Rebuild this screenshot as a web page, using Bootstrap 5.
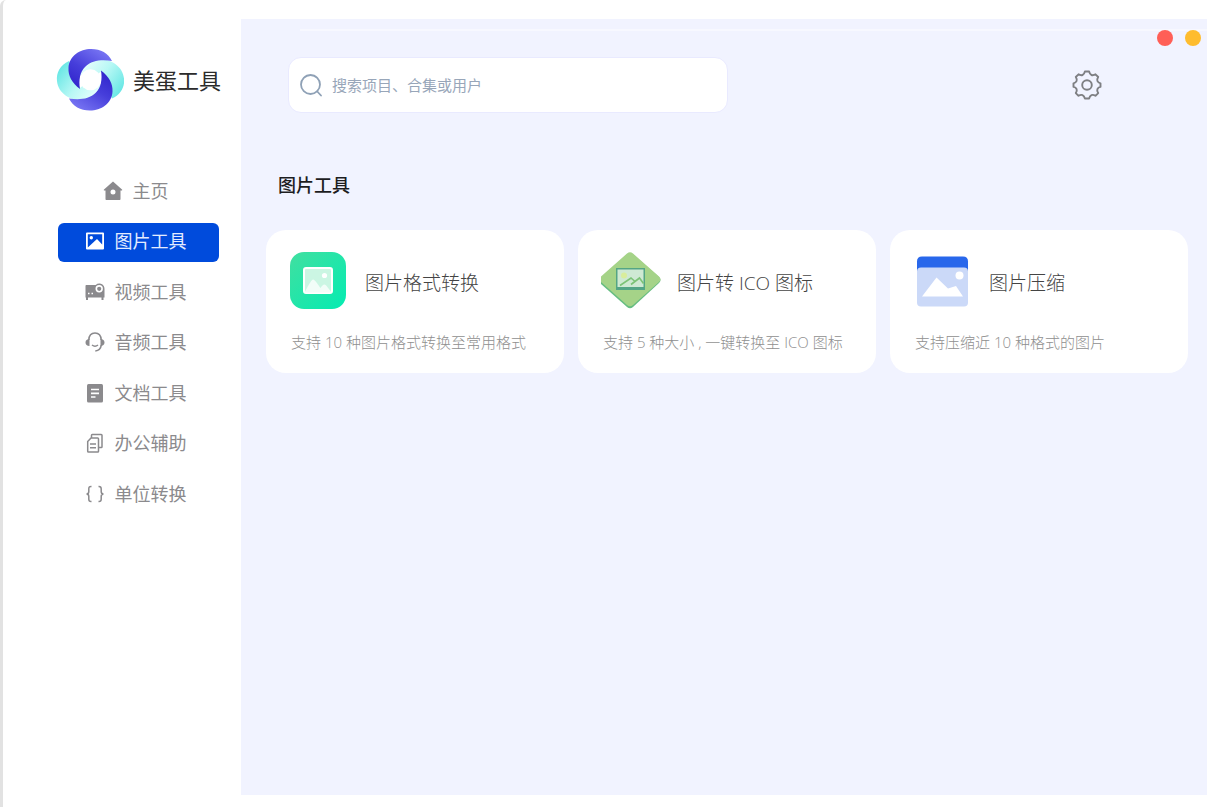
<!DOCTYPE html>
<html lang="zh-CN">
<head>
<meta charset="utf-8">
<meta name="viewport" content="width=device-width, initial-scale=1">
<title>美蛋工具</title>
<link rel="stylesheet" href="https://cdn.jsdelivr.net/npm/bootstrap@5.3.0/dist/css/bootstrap.min.css">
<style>
  body { font-family: "Open Sans", "Noto Sans CJK SC", sans-serif; background: #fff; }
  .app { min-height: 100vh; border-left: 3px solid #e2e2e2; border-top-left-radius: 6px; }
  .side { width: 238px; padding: 48px 22px 24px 52px; }
  .brand { gap: 9px; font-size: 22px; line-height: 32px; color: #2b2b2b; white-space: nowrap; margin-left: 1px; }
  .menu { height: 342px; margin: 60px 0 0 3px; }
  .menu .nav-link { height: 39px; gap: 10px; padding: 0 6px 2px 0; border-radius: 6px; font-size: 18px; line-height: 26px; color: #8b8a8d; }
  .menu .nav-link.active { background: #004bdc; color: #e3ebff; }
  .work { background: #f1f3ff; margin: 19px 0 12px; padding: 10px 19px 24px 25px; min-width: 0; }
  .topline { height: 2px; background: #f7f8ff; margin: 0 -19px 0 34px; }
  .topbar { padding: 26px 86px 0 22px; }
  .dots { top: 30px; right: 6px; gap: 12px; }
  .dots button { width: 16px; height: 16px; border: 0; padding: 0; border-radius: 50%; }
  .dot-close { background: #ff5f57; }
  .dot-min { background: #febc2e; }
  .search { flex: 0 1 440px; height: 56px; background: #fff; border: 1px solid #e9eaff; border-radius: 13px; padding: 0 11px; gap: 10px; }
  .search input { font-size: 15px; line-height: 24px; color: #5d6d85; min-width: 0; }
  .search input::placeholder { color: #98a6b9; opacity: 1; }
  .heading { font-size: 18px; line-height: 28px; font-weight: 500; color: #1d1d1f; margin: 58px 0 31px 12px; }
  .tools { display: grid; grid-template-columns: repeat(auto-fit, minmax(280px, 1fr)); gap: 14px; }
  .tool { background: #fff; border-radius: 20px; padding: 20px 22px 19px 23px; color: #444; }
  .tool-head { gap: 16px; height: 62px; }
  .tool-name { font-size: 19px; line-height: 28px; font-weight: 300; color: #444; margin: 0; padding-top: 3px; }
  .tool-note { font-size: 15px; line-height: 24px; font-weight: 300; color: #8f8f8f; margin: 18px 0 0 2px; white-space: nowrap; }
  svg { flex: none; }
</style>
</head>
<body>
<div class="app d-flex">
  <aside class="side flex-shrink-0">
    <div class="brand d-flex align-items-center">
      <svg width="68" height="64" viewBox="0 0 68 64" aria-hidden="true">
        <defs>
          <linearGradient id="cyan" x1="0" y1=".2" x2="1" y2=".8"><stop offset="0" stop-color="#62e6e4"/><stop offset=".5" stop-color="#b9f8f5"/><stop offset="1" stop-color="#f0fffe"/></linearGradient>
          <linearGradient id="indigo" x1="0" y1="1" x2=".7" y2="0"><stop offset="0" stop-color="#2c1fc8"/><stop offset=".5" stop-color="#463edb"/><stop offset="1" stop-color="#7673f2"/></linearGradient>
          <path id="wing" d="M13 13C4 17 0 25 1 33c1 12 13 20 27 20 11 0 19-6 20-15L34 32 24 40z"/>
          <path id="blade" d="M24 41C16 35 12 28 12.500 20 13 8 24 1 35 1c10 0 17 4 21 12-10-1.500-20-1-27 6-5 5-6.500 13-5 22z"/>
        </defs>
        <use href="#wing" fill="url(#cyan)"/>
        <use href="#wing" fill="url(#cyan)" transform="rotate(180 34.500 31.800)"/>
        <use href="#blade" fill="url(#indigo)"/>
        <use href="#blade" fill="url(#indigo)" transform="rotate(180 34.500 31.800)"/>
        <circle cx="34.500" cy="31.800" r="10.500" fill="#fff"/>
      </svg>
      <span>美蛋工具</span>
    </div>
    <nav class="menu nav flex-column flex-nowrap justify-content-between">
      <a class="nav-link d-flex align-items-center justify-content-center" href="#">
        <svg width="20" height="20" viewBox="0 0 20 20" fill="currentColor"><path fill-rule="evenodd" d="M10 .5 19 8.600c.4.400.2 1-.4 1H17.500V18c0 .6-.4 1-1 1h-13c-.6 0-1-.4-1-1V9.600H1.400c-.6 0-.8-.6-.4-1zM10 8.400a2.500 2.500 0 1 0 0 5 2.500 2.500 0 0 0 0-5z"/></svg>
        <span>主页</span></a>
      <a class="nav-link active d-flex align-items-center justify-content-center" href="#" aria-current="page">
        <svg width="20" height="20" viewBox="0 0 20 20"><path fill="#fff" fill-rule="evenodd" d="M2 1.500h16a1 1 0 0 1 1 1v15a1 1 0 0 1-1 1H2a1 1 0 0 1-1-1v-15a1 1 0 0 1 1-1zm.8 1.800v13.200L12 8l5.200 5.500V3.300z"/><circle cx="6.300" cy="6.800" r="1.700" fill="#fff"/></svg>
        <span>图片工具</span></a>
      <a class="nav-link d-flex align-items-center justify-content-center" href="#">
        <svg width="20" height="20" viewBox="0 0 20 20"><path fill="currentColor" d="M1.500 3h9.200a5.300 5.300 0 0 1 8.100 1c.5 1 .7 2 .7 3v8.500h-1V18h-2v-2.500H3V18H1v-2.500H.5V4c0-.6.4-1 1-1z"/><circle cx="14.200" cy="6.800" r="2.900" fill="none" stroke="#fff" stroke-width="1.600"/><path d="M3 11.500h1.500M6.500 11.500H8" stroke="#fff" stroke-width="1.500"/></svg>
        <span>视频工具</span></a>
      <a class="nav-link d-flex align-items-center justify-content-center" href="#">
        <svg width="20" height="20" viewBox="0 0 20 20" fill="none" stroke="currentColor"><path stroke-width="1.600" d="M3.800 8C4 3.500 6.500 1 10 1s6 2.500 6.200 7M16.300 13c-.5 3.500-3 5.700-6 6"/><path stroke-width="1.500" d="M7 13c1.800 1.500 4.200 1.500 6 0"/><path fill="currentColor" stroke="none" d="M4.500 7v7C2 14 .5 12.700.5 10.500S2 7 4.500 7zM15.500 7v7c2.500 0 4-1.300 4-3.500S18 7 15.500 7z"/></svg>
        <span>音频工具</span></a>
      <a class="nav-link d-flex align-items-center justify-content-center" href="#">
        <svg width="20" height="20" viewBox="0 0 20 20"><rect x="2" y="1" width="16" height="18.500" rx="1.500" fill="currentColor"/><path d="M6 6.500h8M6 10.300h8M6 14h4.500" stroke="#fff" stroke-width="1.700"/></svg>
        <span>文档工具</span></a>
      <a class="nav-link d-flex align-items-center justify-content-center" href="#">
        <svg width="20" height="20" viewBox="0 0 20 20" fill="none" stroke="currentColor" stroke-width="1.500"><path d="M6.500 5V2.300c0-.5.300-.8.800-.8h8.900c.5 0 .8.300.8.800v11.400c0 .5-.3.800-.8.800H13.500M2.700 8.500 6 5h6.700c.5 0 .8.300.8.800v12.400c0 .5-.3.800-.8.800H3.500c-.5 0-.8-.3-.8-.8zM5 11h6M5 14.800h6"/></svg>
        <span>办公辅助</span></a>
      <a class="nav-link d-flex align-items-center justify-content-center" href="#">
        <svg width="20" height="20" viewBox="0 0 20 20" fill="none" stroke="currentColor" stroke-width="1.500"><path d="M6.500 2.500H6c-1.600 0-2.200.8-2.200 2.300v2.700c0 1.500-.7 2.500-2.300 2.500 1.600 0 2.300 1 2.300 2.500v2.700c0 1.500.6 2.300 2.200 2.300h.5M13.500 2.500h.5c1.600 0 2.200.8 2.200 2.300v2.700c0 1.500.7 2.500 2.300 2.500-1.600 0-2.300 1-2.300 2.500v2.700c0 1.500-.6 2.300-2.200 2.300h-.5"/></svg>
        <span>单位转换</span></a>
    </nav>
  </aside>

  <main class="work flex-grow-1">
    <div class="topline"></div>
    <div class="dots d-flex position-absolute">
      <button class="dot-close" type="button" aria-label="关闭"></button>
      <button class="dot-min" type="button" aria-label="最小化"></button>
    </div>
    <div class="topbar d-flex align-items-center justify-content-between">
      <form class="search d-flex align-items-center" role="search">
        <svg width="22" height="24" viewBox="0 0 22 24" fill="none" stroke="#8fa1b6" stroke-width="1.800" stroke-linecap="round"><circle cx="10.500" cy="11.500" r="9.500"/><path d="m17.300 18.500 3.700 4"/></svg>
        <input class="flex-grow-1 border-0 bg-transparent p-0" type="text" placeholder="搜索项目、合集或用户" aria-label="搜索">
      </form>
      <button class="btn p-0 border-0 lh-1" type="button" aria-label="设置">
        <svg width="30" height="30" viewBox="0 0 30 30" fill="none" stroke="#7e7f83" stroke-width="1.900" stroke-linejoin="round"><path d="M12.900 1.500h4.200q.7 2.800 2.400 3.500 1.700.7 4-.7l2.700 2.700q-1.500 2.300-.8 4 .7 1.700 3.100 2.300v3.600q-2.400.5-3.100 2.200-.7 1.700.8 4l-2.700 2.700q-2.300-1.400-4-.7-1.700.7-2.400 3.400h-4.200q-.7-2.700-2.400-3.400-1.700-.7-4 .7L3.800 23.100q1.500-2.300.8-4-.7-1.700-3.100-2.200v-3.600q2.400-.6 3.100-2.300.7-1.700-.8-4l2.700-2.700q2.300 1.400 4 .7 1.700-.7 2.400-3.500z"/><circle cx="15" cy="15" r="4.800"/></svg>
      </button>
    </div>
    <h1 class="heading">图片工具</h1>
    <div class="tools">
      <a class="tool d-block text-decoration-none" href="#">
        <div class="tool-head d-flex align-items-center">
          <svg width="60" height="60" viewBox="0 0 60 60"><defs><linearGradient id="gr" x1="0" y1="0" x2="1" y2="1"><stop offset="0" stop-color="#41dfa0"/><stop offset="1" stop-color="#04ecb2"/></linearGradient></defs>
            <rect x="1" y="1" width="56" height="57" rx="14" fill="url(#gr)"/><rect x="15" y="17" width="28" height="25" rx="2" fill="#cbf6e3" stroke="#fff" stroke-width="2"/><circle cx="35.500" cy="24.500" r="2.600" fill="#fff"/><path fill="#f2fdf8" d="M15.500 41.500C18 37 22 29 24 28.500c2 0 5.500 6 7.500 8.500 1.500-2 2.500-3.500 4-3.500s5 5 7 8z"/></svg>
          <h2 class="tool-name">图片格式转换</h2>
        </div>
        <p class="tool-note">支持 10 种图片格式转换至常用格式</p>
      </a>
      <a class="tool d-block text-decoration-none" href="#">
        <div class="tool-head d-flex align-items-center">
          <svg width="60" height="60" viewBox="0 0 60 60"><path fill="#66bd81" d="M26 3.500q3-2.500 6 0L58 26q3 3 0 6L32 56q-3 2.500-6 0L0 33q-2-3 0-6z"/><path fill="#a5d388" d="M26 2.500q3-2.500 6 0l26 23q3 3 0 5.500L32 54q-3 2.500-6 0L0 31q-2-3 0-5.500z"/><rect x="15" y="17" width="29" height="22" fill="#54a585"/><rect x="16.500" y="18.500" width="26" height="17.500" fill="#cfe9d3"/><circle cx="23" cy="24.500" r="3" fill="#d9ed9c"/><path d="m19 34.500 11-7.500 3.500 3M30 33.500l8.500-6.500 4 5.500" fill="none" stroke="#7cc276" stroke-width="1.600"/></svg>
          <h2 class="tool-name">图片转 ICO 图标</h2>
        </div>
        <p class="tool-note">支持 5 种大小 , 一键转换至 ICO 图标</p>
      </a>
      <a class="tool d-block text-decoration-none" href="#">
        <div class="tool-head d-flex align-items-center">
          <svg width="60" height="60" viewBox="0 0 60 60"><path fill="#2867eb" d="M4 20V10.500q0-5 5-5h41q5 0 5 5V20z"/><rect x="4" y="16.500" width="51" height="39" rx="4" fill="#cbd9f8"/><circle cx="46.500" cy="24.500" r="4" fill="#fff"/><path fill="#fff" d="m9 45.500 14.500-19L35 37.500l8-2.500 7 10.500z"/></svg>
          <h2 class="tool-name">图片压缩</h2>
        </div>
        <p class="tool-note">支持压缩近 10 种格式的图片</p>
      </a>
    </div>
  </main>
</div>
<script src="https://cdn.jsdelivr.net/npm/bootstrap@5.3.0/dist/js/bootstrap.bundle.min.js"></script>
</body>
</html>
